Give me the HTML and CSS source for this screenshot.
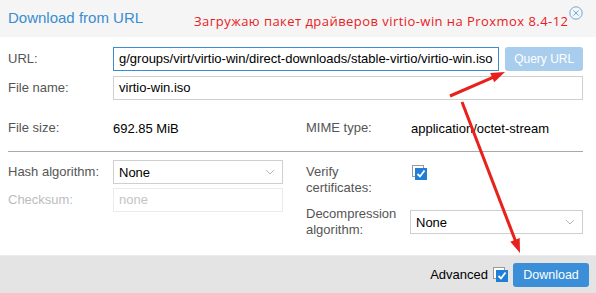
FILE: index.html
```html
<!DOCTYPE html>
<html>
<head>
<meta charset="utf-8">
<link rel="stylesheet" href="styles.css">
</head>
<body>
<div class="win">
  <div class="header">
    <span class="title">Download from URL</span>
    <span class="note">Загружаю пакет драйверов virtio-win на Proxmox 8.4-12</span>
    <svg class="close" width="14" height="14" viewBox="0 0 14 14">
      <circle cx="7" cy="7" r="6.2" fill="none" stroke="#6aa8dc" stroke-width="1"/>
      <path d="M4.4 4.4 L9.6 9.6 M9.6 4.4 L4.4 9.6" stroke="#6aa8dc" stroke-width="1"/>
    </svg>
  </div>
  <div class="body">
    <div class="row r-url">
      <span class="lbl">URL:</span>
      <div class="input focus">g/groups/virt/virtio-win/direct-downloads/stable-virtio/virtio-win.iso</div>
      <button class="btn btn-off">Query URL</button>
    </div>
    <div class="row r-name">
      <span class="lbl">File name:</span>
      <div class="input grow">virtio-win.iso</div>
    </div>
    <div class="cols info">
      <div class="row"><span class="lbl">File size:</span><span class="val">692.85 MiB</span></div>
      <div class="row"><span class="lbl">MIME type:</span><span class="val">application/octet-stream</span></div>
    </div>
    <div class="sep"></div>
    <div class="cols adv">
      <div class="col">
        <div class="row">
          <span class="lbl">Hash algorithm:</span>
          <div class="combo"><span>None</span>
            <svg class="chev" width="10" height="6" viewBox="0 0 10 6"><path d="M1 1 L5 5 L9 1" fill="none" stroke="#b5b5b5" stroke-width="1"/></svg>
          </div>
        </div>
        <div class="row">
          <span class="lbl dis">Checksum:</span>
          <div class="input disabled">none</div>
        </div>
      </div>
      <div class="col right">
        <div class="row two">
          <span class="lbl">Verify<br>certificates:</span>
          <svg class="cb" width="16" height="16" viewBox="0 0 16 16">
            <rect x="0.5" y="0.5" width="11" height="11" fill="#fff" stroke="#9a9a9a"/>
            <rect x="3" y="3" width="12" height="12" fill="#1f7fd6"/>
            <path d="M5.5 9 L8 11.5 L12.5 5.5" fill="none" stroke="#fff" stroke-width="1.8"/>
          </svg>
        </div>
        <div class="row two dec">
          <span class="lbl">Decompression<br>algorithm:</span>
          <div class="combo wide"><span>None</span>
            <svg class="chev" width="10" height="6" viewBox="0 0 10 6"><path d="M1 1 L5 5 L9 1" fill="none" stroke="#b5b5b5" stroke-width="1"/></svg>
          </div>
        </div>
      </div>
    </div>
  </div>
  <div class="footer">
    <span class="adv-lbl">Advanced</span>
    <svg class="cb" width="16" height="16" viewBox="0 0 16 16">
      <rect x="0.5" y="0.5" width="11" height="11" fill="#fff" stroke="#9a9a9a"/>
      <rect x="3" y="3" width="12" height="12" fill="#1f7fd6"/>
      <path d="M5.5 9 L8 11.5 L12.5 5.5" fill="none" stroke="#fff" stroke-width="1.8"/>
    </svg>
    <button class="btn btn-main">Download</button>
  </div>
  <svg class="arrows" width="596" height="293" viewBox="0 0 596 293">
    <line x1="450" y1="96" x2="493" y2="77.3" stroke="#e8211d" stroke-width="3"/>
    <polygon points="505,72 494.2,82.2 490.2,73.0" fill="#e8211d"/>
    <line x1="462" y1="102" x2="515.5" y2="241" stroke="#e8211d" stroke-width="3"/>
    <polygon points="520,253 510.3,241.7 519.7,238.1" fill="#e8211d"/>
  </svg>
</div>
</body>
</html>
```

FILE: styles.css
```css
html, body {
  margin: 0;
  padding: 0;
  background: #fff;
}
.win {
  position: relative;
  width: 596px;
  height: 293px;
  overflow: hidden;
  font-family: "Liberation Sans", Arial, sans-serif;
  font-size: 13px;
  color: #000;
  display: flex;
  flex-direction: column;
}
.header {
  height: 37px;
  background: #f5f5f5;
  display: flex;
  align-items: flex-start;
  padding-left: 8px;
  box-sizing: border-box;
}
.title {
  font-size: 15px;
  color: #3a8dd0;
  margin-top: 9px;
  line-height: 17px;
}
.note {
  font-family: "Open Sans", "Noto Sans", sans-serif;
  font-size: 13px;
  letter-spacing: 0.45px;
  color: #e8211d;
  margin-left: 51px;
  margin-top: 13px;
  line-height: 17px;
  white-space: nowrap;
}
.close {
  flex: none;
  margin-left: 1px;
  margin-top: 6px;
}
.body {
  flex: 1;
  padding: 10px 13px 0 8px;
  display: flex;
  flex-direction: column;
}
.row {
  display: flex;
  align-items: center;
}
.lbl {
  width: 105px;
  flex: none;
  color: #555;
  line-height: 16px;
}
.lbl.dis {
  color: #bcbcbc;
}
.input {
  height: 24px;
  box-sizing: border-box;
  border: 1px solid #cfcfcf;
  padding: 0 5px;
  line-height: 22px;
  white-space: nowrap;
  overflow: hidden;
  color: #000;
}
.input.focus {
  width: 388px;
  border-color: #3a8dd0;
}
.input.grow {
  flex: 1;
}
.r-url {
  align-items: flex-start;
}
.r-url .lbl {
  line-height: 24px;
}
.r-name {
  margin-top: 5px;
}
.btn {
  font-family: "Liberation Sans", Arial, sans-serif;
  font-size: 12px;
  color: #fff;
  border: none;
  border-radius: 3px;
  height: 24px;
  padding: 0;
}
.btn-off {
  margin-left: 6px;
  width: 78px;
  background: #a9cdec;
}
.cols {
  display: grid;
  grid-template-columns: 275px 277px;
  column-gap: 23px;
}
.info {
  margin-top: 16px;
  height: 24px;
}
.info .lbl {
  line-height: 24px;
}
.info .val {
  color: #000;
}
.sep {
  height: 1px;
  background: #a9a9a9;
  margin-top: 11px;
}
.adv {
  margin-top: 8px;
}
.col {
  display: flex;
  flex-direction: column;
  gap: 4px;
}
.combo {
  width: 170px;
  height: 24px;
  box-sizing: border-box;
  border: 1px solid #cfcfcf;
  padding: 0 5px;
  display: flex;
  align-items: center;
  justify-content: space-between;
}
.combo.wide {
  width: 173px;
}
.chev {
  margin-right: 2px;
}
.input.disabled {
  width: 170px;
  border-color: #ebebeb;
  color: #c4c4c4;
}
.right {
  padding-top: 4px;
  gap: 10px;
}
.two .lbl {
  width: 104px;
}
.two {
  align-items: flex-start;
}
.cb {
  flex: none;
  margin-top: 1px;
  margin-left: 2px;
}
.dec {
  align-items: center;
}
.footer {
  height: 38px;
  box-sizing: border-box;
  border-top: 1px solid #ececec;
  background: #e4e4e4;
  display: flex;
  align-items: center;
  justify-content: flex-end;
  padding-right: 7px;
}
.adv-lbl {
  color: #000;
  margin-right: 5px;
}
.footer .cb {
  margin: 0 4px 0 0;
}
.btn-main {
  width: 76px;
  background: #3a8fd8;
  font-size: 12.5px;
}
.arrows {
  position: absolute;
  left: 0;
  top: 0;
  pointer-events: none;
}
```
